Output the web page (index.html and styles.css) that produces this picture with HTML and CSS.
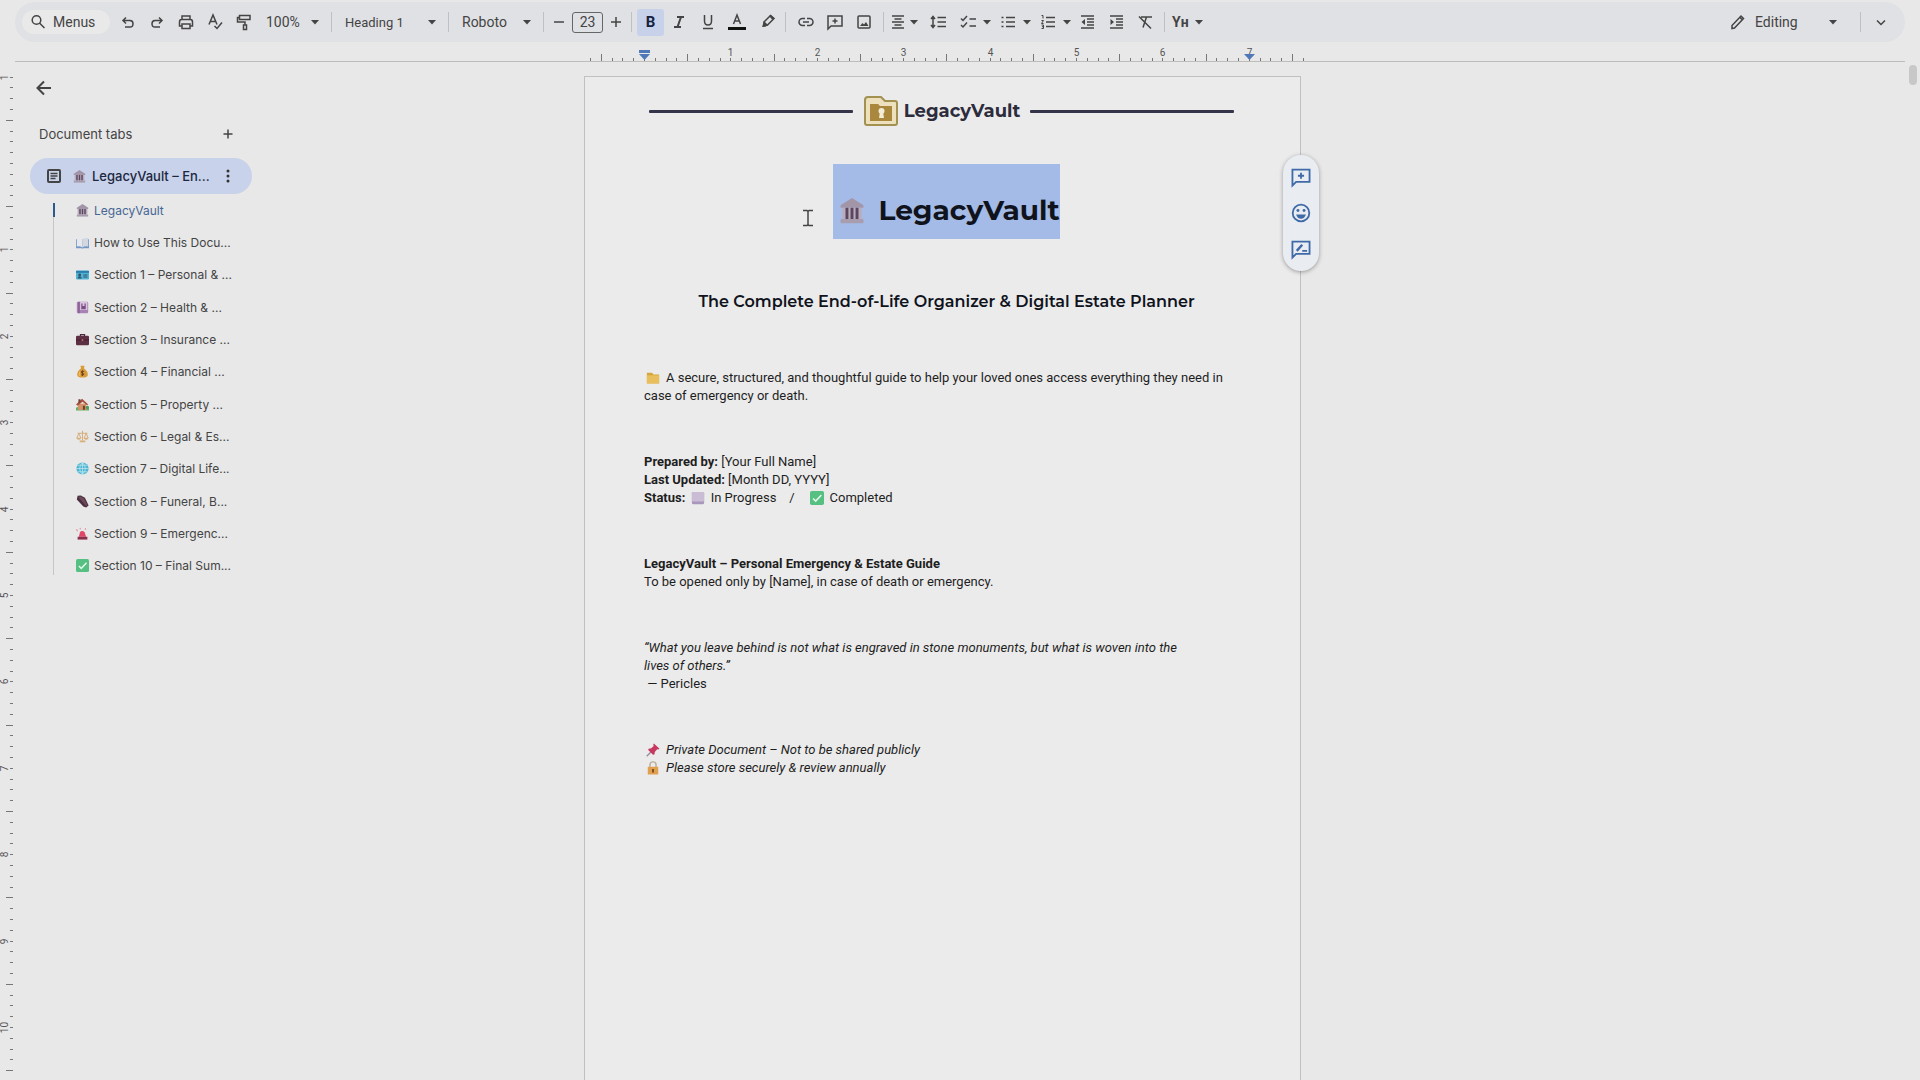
FILE: index.html
```html
<!DOCTYPE html>
<html lang="en">
<head>
    <meta charset="UTF-8">
    <meta name="viewport" content="width=device-width, initial-scale=1.0">
    <title>LegacyVault – End-of-Life Organizer</title>
    <link rel="stylesheet" href="styles.css">
</head>
<body>
    <!-- shared pictograms -->
    <svg class="sprite" aria-hidden="true">
        <symbol id="e-bank" viewBox="0 0 16 16">
            <path fill="#a295a8" d="M8 0 15 4.500V6H1V4.500z"/>
            <path fill="#b9adbd" d="M2 6h12v7H2z"/>
            <path fill="#5b4660" d="M4 6h1.800v7H4zM7.100 6h1.800v7H7.100zM10.200 6H12v7h-1.800z"/>
            <path fill="#a99cad" d="M1 13h14v2.500H1z"/>
        </symbol>
        <symbol id="e-book" viewBox="0 0 16 16">
            <path fill="#7397c4" d="M0 4h16v11H9l-1 .8L7 15H0z"/>
            <path fill="#e6e8ee" d="M1 2.500q4-.5 7 1.500v10q-3-1.800-7-1z"/>
            <path fill="#d3d7e0" d="M15 2.500q-4-.5-7 1.500v10q3-1.800 7-1z"/>
        </symbol>
        <symbol id="e-id" viewBox="0 0 16 16">
            <rect y="3" width="16" height="11" rx="1.500" fill="#4fb3d3"/>
            <path fill="#2b7fae" d="M0 3.500h16V6H0z"/>
            <circle cx="4.500" cy="8.500" r="1.800" fill="#34536d"/>
            <path fill="#34536d" d="M2 13q0-3 2.500-3T7 13zM9 8h5v1.200H9zM9 10.500h5v1.200H9z"/>
        </symbol>
        <symbol id="e-notes" viewBox="0 0 16 16">
            <rect x="1" y="1" width="14" height="14" rx="1.500" fill="#a982b5"/>
            <path fill="#d9c6de" d="M5 1h9v10H5z"/>
            <path fill="#7c4f84" d="M6.500 3H8v3h2.500V3H12v7H6.500zM3 1h1.300v14H3z"/>
        </symbol>
        <symbol id="e-case" viewBox="0 0 16 16">
            <path fill="none" stroke="#4b2738" stroke-width="1.500" d="M5.500 4V2h5v2"/>
            <rect y="3.500" width="16" height="11.500" rx="1.500" fill="#5c2f42"/>
            <path fill="#43202f" d="M0 8h16v1.200H0z"/>
            <path fill="#b8616f" d="M7 7.500h2v2.500H7z"/>
        </symbol>
        <symbol id="e-money" viewBox="0 0 16 16">
            <path fill="#d99a3a" d="M5.500 1h5L9.800 4Q15 8 14.500 12.500 14 15.500 8 15.500T1.500 12.500Q1 8 6.200 4z"/>
            <path fill="#f0bd5d" d="M5 7q-2.500 3-1.500 6 .5 1 2 1z"/>
            <path fill="none" stroke="#70451f" stroke-width="1.200" d="M10 8q-3.500-1.500-3.700.500T9.800 11Q9.800 13.300 6 12M8 6.500v7"/>
        </symbol>
        <symbol id="e-house" viewBox="0 0 16 16">
            <path fill="#69ad63" d="M0 12q8-5 16 0v3.500H0z"/>
            <path fill="#d39268" d="M2.500 7h10v7.500h-10z"/>
            <path fill="#a94f3d" d="M7.500 1 15 8l-1.500 1L8 4.500 2 9.500 0 8z"/>
            <path fill="#6e3f35" d="M8.500 9.500h2.500v5H8.500zM3 1.500h2.500V5L3 6.500z"/>
            <circle cx="14" cy="11.500" r="2" fill="#4f9a54"/>
        </symbol>
        <symbol id="e-scales" viewBox="0 0 16 16">
            <path fill="none" stroke="#d5ad7c" stroke-width="1.200" d="M8 1v12M2 4h12M3.500 4 1 10M3.500 4 6 10M12.500 4 10 10M12.500 4 15 10"/>
            <path fill="#d8ae78" d="M.5 9.500h6q-.5 2.500-3 2.500t-3-2.500zM9.500 9.500h6q-.5 2.500-3 2.500t-3-2.500zM4.500 13h7v2h-7z"/>
        </symbol>
        <symbol id="e-globe" viewBox="0 0 16 16">
            <circle cx="8" cy="8" r="7.500" fill="#4eb6d4"/>
            <path fill="none" stroke="#c2e6ef" stroke-width=".9" d="M8 .5v15M.5 8h15M2 4h12M2 12h12M8 .5q-7 7.500 0 15M8 .5q7 7.500 0 15"/>
        </symbol>
        <symbol id="e-coffin" viewBox="0 0 16 16">
            <path fill="#4a2f3d" d="m2 1 4-.5 5 3L15.500 13l-3 2.500L9 14 1 5.500z"/>
            <path fill="#6d4a5a" d="m3 2 3-.3 4 2.500 4 8.300-1.500 1L4 4z"/>
        </symbol>
        <symbol id="e-siren" viewBox="0 0 16 16">
            <path fill="#e0456a" d="M3.500 12 5 6.500Q5.500 5 7.500 5t3 1.500L12.500 12z"/>
            <path fill="#8c2f4c" d="M2 12h12v3.500H2z"/>
            <path stroke="#e58a9c" stroke-width="1.300" d="M2 5 .5 3M5.500 3 5 1M11 3.500 12 1.500"/>
        </symbol>
        <symbol id="e-check" viewBox="0 0 16 16">
            <rect width="16" height="16" rx="2" fill="#55c081"/>
            <path fill="none" stroke="#e6f6ea" stroke-width="1.800" d="m3.500 8.500 3 3L13 4.500"/>
        </symbol>
        <symbol id="e-folder" viewBox="0 0 16 16">
            <path fill="#d6a63c" d="M1 2h6l1.500 2H15v10H1z"/>
            <path fill="#e8bf5c" d="M1 5h14v9.500H1z"/>
        </symbol>
        <symbol id="e-square" viewBox="0 0 16 16">
            <rect x="1" y="1" width="14" height="14" rx="1.500" fill="#a996bb"/>
            <rect x="1" y="1" width="14" height="11" rx="1.500" fill="#c9bcd4"/>
        </symbol>
        <symbol id="e-pin" viewBox="0 0 16 16">
            <path stroke="#8e8e98" stroke-width="1.400" d="m.8 15.200 6-6"/>
            <path fill="#c8375f" d="m9 .5 6.500 6-1.500 1-1.200-.3-2.800 3-.3 2.800-1.700.5-5.500-5.500.5-1.500 3-.5 2.800-2.500-.5-2z"/>
        </symbol>
        <symbol id="e-lock" viewBox="0 0 16 16">
            <path fill="none" stroke="#b7ab9b" stroke-width="1.600" d="M4.500 8V4.500Q4.500 1 8 1t3.500 3.500V8"/>
            <rect x="2" y="6.500" width="12" height="9" rx="1" fill="#e0a050"/>
            <path fill="#74451f" d="M7 9h2v4H7z"/>
        </symbol>
        <symbol id="i-caret" viewBox="0 0 10 10"><path fill="#444" d="M1 3h8L5 7.500z"/></symbol>
        <symbol id="i-comment" viewBox="0 0 18 18">
            <path class="line" d="M2 16V3h14v10H5zM9 5.500v5M6.500 8h5"/>
        </symbol>
    </svg>

    <header class="toolbar">
        <button class="menus" type="button">
            <svg class="icon" viewBox="0 0 18 18"><circle class="line" cx="7.500" cy="7" r="4.300"/><path class="line" d="m10.500 10 5 5"/></svg>
            Menus
        </button>
        <button class="tool" type="button" aria-label="Undo"><svg class="icon" viewBox="0 0 18 18"><path class="line" d="M7 4.500 4 7.500l3 3M4 7.500h7q3 0 3 3.300T11 14H6"/></svg></button>
        <button class="tool" type="button" aria-label="Redo"><svg class="icon" viewBox="0 0 18 18"><path class="line" d="m11 4.500 3 3-3 3M14 7.500H7q-3 0-3 3.300T7 14h5"/></svg></button>
        <button class="tool" type="button" aria-label="Print"><svg class="icon" viewBox="0 0 18 18"><path class="line" d="M5 6.500V3h8v3.500M5 13H2.500V9q0-2.500 2-2.500h9q2 0 2 2.500v4H13M5 11h8v4.500H5z"/></svg></button>
        <button class="tool" type="button" aria-label="Spelling check"><svg class="icon" viewBox="0 0 18 18"><path class="line" d="M3 11.500 7 2l4 9.500M4.500 8.500h5M8.500 13l2.500 2.500 5-6"/></svg></button>
        <button class="tool" type="button" aria-label="Paint format"><svg class="icon" viewBox="0 0 18 18"><path class="line" d="M4.500 2.500H15v4H4.500zM4.500 4.500H2.500V9H10v3M8.500 12h3v4.500h-3z"/></svg></button>
        <button class="select zoom" type="button">100% <svg class="caret"><use href="#i-caret"/></svg></button>
        <span class="divider"></span>
        <button class="select style" type="button">Heading 1 <svg class="caret"><use href="#i-caret"/></svg></button>
        <span class="divider"></span>
        <button class="select font" type="button">Roboto <svg class="caret"><use href="#i-caret"/></svg></button>
        <span class="divider"></span>
        <button class="step" type="button" aria-label="Decrease font size"><svg class="icon" viewBox="0 0 18 18"><path class="line" d="M4 9h10"/></svg></button>
        <input class="size" type="text" value="23" aria-label="Font size">
        <button class="step" type="button" aria-label="Increase font size"><svg class="icon" viewBox="0 0 18 18"><path class="line" d="M4 9h10M9 4v10"/></svg></button>
        <span class="divider"></span>
        <button class="tool active" type="button" aria-label="Bold">B</button>
        <button class="tool" type="button" aria-label="Italic"><svg class="icon" viewBox="0 0 18 18"><path class="line thick" d="M7 4h7M4 14h7M11 4 7.500 14"/></svg></button>
        <button class="tool" type="button" aria-label="Underline"><svg class="icon" viewBox="0 0 18 18"><path class="line" d="M5.500 2v6q0 4 3.500 4t3.500-4V2M4 15.500h10"/></svg></button>
        <button class="tool" type="button" aria-label="Text color"><svg class="icon" viewBox="0 0 18 18"><path class="line" d="M5.500 11 9 2l3.500 9M6.500 8h5"/><path fill="#111" d="M0 14h18v3H0z"/></svg></button>
        <button class="tool" type="button" aria-label="Highlight color"><svg class="icon" viewBox="0 0 18 18"><path class="line" d="m7 9 6.500-6.500L17 5.500 10.500 12 7 13z"/><path fill="#444" d="m7 8 4 4-2.500 1.500L5 14zM12 3l2-1 3 3-1.500 2z"/></svg></button>
        <span class="divider"></span>
        <button class="tool" type="button" aria-label="Insert link"><svg class="icon" viewBox="0 0 18 18"><path class="line" d="M8 5.500H5.500a3.500 3.500 0 0 0 0 7H8M10 5.500h2.500a3.500 3.500 0 0 1 0 7H10M6 9h6"/></svg></button>
        <button class="tool" type="button" aria-label="Add comment"><svg class="icon"><use href="#i-comment"/></svg></button>
        <button class="tool" type="button" aria-label="Insert image"><svg class="icon" viewBox="0 0 18 18"><rect class="line" x="3" y="3" width="12" height="12" rx="1"/><path fill="#444" d="m5 13 2.500-3 1.500 1.500 2-2.500 2.500 4z"/></svg></button>
        <span class="divider"></span>
        <button class="split tight" type="button" aria-label="Align"><svg class="icon" viewBox="0 0 18 18"><path class="line" d="M3 3h12M5.500 6h7M3 9h12M5.500 12h7M3 15h12"/></svg><svg class="caret"><use href="#i-caret"/></svg></button>
        <button class="tool" type="button" aria-label="Line spacing"><svg class="icon" viewBox="0 0 18 18"><path class="line" d="M4 4v10M2 6l2-2.500L6 6M2 12l2 2.500L6 12M8.500 4.500H17M8.500 9H17M8.500 13.500H17"/></svg></button>
        <button class="split" type="button" aria-label="Checklist"><svg class="icon" viewBox="0 0 18 18"><path class="line" d="m2 5.500 2 2L8 3M2 12l2 2 4-4.500M10.500 6H17M10.500 13H17"/></svg><svg class="caret"><use href="#i-caret"/></svg></button>
        <button class="split" type="button" aria-label="Bulleted list"><svg class="icon" viewBox="0 0 18 18"><path class="line" d="M2.500 4.500h2M2.500 9h2M2.500 13.500h2M7 4.500h9M7 9h9M7 13.500h9"/></svg><svg class="caret"><use href="#i-caret"/></svg></button>
        <button class="split" type="button" aria-label="Numbered list"><svg class="icon" viewBox="0 0 18 18"><path class="line" d="M7 4.500h9M7 9h9M7 13.500h9"/><path class="line thin" d="M2.500 2.500H4v3M2.500 7.500h2l-2 3h2M2.500 12h2v3.500h-2M3 13.700h1.500"/></svg><svg class="caret"><use href="#i-caret"/></svg></button>
        <button class="tool" type="button" aria-label="Decrease indent"><svg class="icon" viewBox="0 0 18 18"><path class="line" d="M3 3h13M9 6h7M9 9h7M9 12h7M3 15h13"/><path fill="#444" d="M7 6v6L3.500 9z"/></svg></button>
        <button class="tool" type="button" aria-label="Increase indent"><svg class="icon" viewBox="0 0 18 18"><path class="line" d="M3 3h13M9 6h7M9 9h7M9 12h7M3 15h13"/><path fill="#444" d="M3.500 6v6L7 9z"/></svg></button>
        <button class="tool" type="button" aria-label="Clear formatting"><svg class="icon" viewBox="0 0 18 18"><path class="line" d="M5 4h11M10.500 4 7 14.500M3 3.500l12 12"/></svg></button>
        <span class="divider"></span>
        <button class="split lang" type="button" aria-label="Input tools">Yн <svg class="caret"><use href="#i-caret"/></svg></button>
        <div class="right-tools">
            <button class="select mode" type="button">
                <svg class="icon" viewBox="0 0 18 18"><path class="line" d="M3 15.500v-3l9-9.500 2.500 2.500-9 9.500zM11 4.500l2.500 2.500"/></svg>
                Editing <svg class="caret"><use href="#i-caret"/></svg>
            </button>
            <span class="divider"></span>
            <button class="tool" type="button" aria-label="Hide menus"><svg class="icon" viewBox="0 0 18 18"><path class="line" d="m5 7.500 4 4 4-4"/></svg></button>
        </div>
    </header>

    <div class="ruler">
        <svg class="ruler-x" id="rulerX"></svg>
    </div>

    <main class="workspace">
        <div class="left">
            <svg class="ruler-y" id="rulerY"></svg>
            <nav class="sidebar">
                <button class="plain back" type="button" aria-label="Close tabs"><svg class="icon" viewBox="0 0 18 18"><path class="line thick" d="M16 9H3M9 2.500 2.500 9 9 15.500"/></svg></button>
                <div class="tabs-head">
                    <h2>Document tabs</h2>
                    <button class="plain" type="button" aria-label="Add tab"><svg class="icon" viewBox="0 0 18 18"><path class="line" d="M4.500 9h9M9 4.500v9"/></svg></button>
                </div>
                <div class="tab">
                    <svg class="icon" viewBox="0 0 18 18"><rect class="line thick" x="3" y="3" width="12" height="12" rx="1"/><path class="line" d="M5.500 6.500h7M5.500 9h7M5.500 11.500h5"/></svg>
                    <svg class="emoji"><use href="#e-bank"/></svg>
                    <a href="#top">LegacyVault – En...</a>
                    <button class="plain" type="button" aria-label="Tab options"><svg class="icon" viewBox="0 0 18 18"><g fill="#333"><circle cx="9" cy="4" r="1.500"/><circle cx="9" cy="9" r="1.500"/><circle cx="9" cy="14" r="1.500"/></g></svg></button>
                </div>
                <ul class="outline">
                    <li class="current"><svg class="emoji"><use href="#e-bank"/></svg><a href="#top">LegacyVault</a></li>
                    <li><svg class="emoji"><use href="#e-book"/></svg><a href="#how">How to Use This Docu...</a></li>
                    <li><svg class="emoji"><use href="#e-id"/></svg><a href="#s1">Section 1 – Personal &amp; ...</a></li>
                    <li><svg class="emoji"><use href="#e-notes"/></svg><a href="#s2">Section 2 – Health &amp; ...</a></li>
                    <li><svg class="emoji"><use href="#e-case"/></svg><a href="#s3">Section 3 – Insurance ...</a></li>
                    <li><svg class="emoji"><use href="#e-money"/></svg><a href="#s4">Section 4 – Financial ...</a></li>
                    <li><svg class="emoji"><use href="#e-house"/></svg><a href="#s5">Section 5 – Property ...</a></li>
                    <li><svg class="emoji"><use href="#e-scales"/></svg><a href="#s6">Section 6 – Legal &amp; Es...</a></li>
                    <li><svg class="emoji"><use href="#e-globe"/></svg><a href="#s7">Section 7 – Digital Life...</a></li>
                    <li><svg class="emoji"><use href="#e-coffin"/></svg><a href="#s8">Section 8 – Funeral, B...</a></li>
                    <li><svg class="emoji"><use href="#e-siren"/></svg><a href="#s9">Section 9 – Emergenc...</a></li>
                    <li><svg class="emoji"><use href="#e-check"/></svg><a href="#s10">Section 10 – Final Sum...</a></li>
                </ul>
            </nav>
        </div>

        <article class="page" id="top">
            <div class="letterhead">
                <svg class="logo" viewBox="0 0 36 32">
                    <path fill="#ece0bd" stroke="#a39152" stroke-width="2" stroke-linejoin="round" d="M5 2h13l4 4h10q2 0 2 2v20q0 2-2 2H4q-2 0-2-2V5q0-3 3-3z"/>
                    <path fill="#a9873c" d="M7 9h8l2 2h12v15H7z"/>
                    <circle cx="18.500" cy="16" r="3" fill="#f3ecd6"/>
                    <path fill="#f3ecd6" d="M17 17h3l1 6h-5z"/>
                </svg>
                <span>LegacyVault</span>
            </div>

            <h1><span class="selected"><svg class="emoji"><use href="#e-bank"/></svg>LegacyVault</span></h1>
            <h3>The Complete End-of-Life Organizer &amp; Digital Estate Planner</h3>

            <p><svg class="emoji"><use href="#e-folder"/></svg>A secure, structured, and thoughtful guide to help your loved ones access everything they need in<br>case of emergency or death.</p>
            <p>
                <b>Prepared by:</b> [Your Full Name]<br>
                <b>Last Updated:</b> [Month DD, YYYY]<br>
                <b>Status:</b> <svg class="emoji"><use href="#e-square"/></svg>In Progress &nbsp; &nbsp;/ &nbsp; &nbsp;<svg class="emoji"><use href="#e-check"/></svg>Completed
            </p>
            <p><b>LegacyVault – Personal Emergency &amp; Estate Guide</b><br>To be opened only by [Name], in case of death or emergency.</p>
            <p><i>“What you leave behind is not what is engraved in stone monuments, but what is woven into the<br>lives of others.”</i><br>&nbsp;— Pericles</p>
            <p><i><svg class="emoji"><use href="#e-pin"/></svg>Private Document – Not to be shared publicly<br><svg class="emoji"><use href="#e-lock"/></svg>Please store securely &amp; review annually</i></p>

            <svg class="cursor" viewBox="0 0 12 18"><path class="line" d="M1 1.500h4l1 1 1-1h4M1 16.500h4l1-1 1 1h4M6 2.500v13"/></svg>

            <div class="actions">
                <button class="plain" type="button" aria-label="Add comment"><svg class="icon"><use href="#i-comment"/></svg></button>
                <button class="plain" type="button" aria-label="Add emoji reaction"><svg class="icon" viewBox="0 0 18 18"><circle class="line" cx="9" cy="9" r="6.800"/><path fill="#3f6aa8" d="M5 10.200h8q-1 3.500-4 3.500t-4-3.500z"/><circle cx="6.500" cy="7" r="1.200" fill="#3f6aa8"/><circle cx="11.500" cy="7" r="1.200" fill="#3f6aa8"/></svg></button>
                <button class="plain" type="button" aria-label="Suggest edits"><svg class="icon" viewBox="0 0 18 18"><path class="line" d="M2 16V3h14v10H5zM10 10.500h4"/><path class="line thick" d="m5.500 10.500 4.500-5"/></svg></button>
            </div>
        </article>

        <div class="scrollbar"><div class="thumb"></div></div>
    </main>

    <script src="ruler.js"></script>
</body>
</html>
```
FILE: styles.css
```css
* {
    box-sizing: border-box;
}
body {
    --ink: #444;
    margin: 0;
    height: 100vh;
    display: flex;
    flex-direction: column;
    overflow: hidden;
    background: #e8e8e8;
    color: #444;
    font-family: Inter, "Open Sans", sans-serif;
    font-size: 13px;
}
.sprite {
    display: none;
}
button {
    display: flex;
    align-items: center;
    padding: 0;
    border: none;
    background: none;
    color: inherit;
    font: inherit;
    cursor: pointer;
}
a {
    color: inherit;
    text-decoration: none;
}
.icon {
    width: 18px;
    height: 18px;
    flex: none;
}
.caret {
    width: 10px;
    height: 10px;
    flex: none;
}
.line {
    fill: none;
    stroke: var(--ink);
    stroke-width: 1.5;
}
.thick {
    stroke-width: 2;
}
.thin {
    stroke-width: 1;
}

/* toolbar */
.toolbar {
    display: flex;
    align-items: center;
    height: 40px;
    margin: 2px 15px 0;
    padding: 0 10px 0 7px;
    border-radius: 20px;
    background: #e0e1e4;
    font-family: Roboto, sans-serif;
    font-size: 14px;
    flex: none;
}
.menus {
    width: 88px;
    height: 24px;
    margin-right: 3px;
    padding-left: 7px;
    gap: 6px;
    border-radius: 12px;
    background: #e9e9ea;
}
.tool {
    width: 29px;
    height: 27px;
    justify-content: center;
}
.tool.active {
    width: 27px;
    border-radius: 3px;
    background: #c8d1ea;
    color: #14213d;
    font-size: 15px;
    font-weight: bold;
}
.select {
    height: 27px;
    padding: 0 6px 0 8px;
    justify-content: space-between;
}
.zoom {
    width: 68px;
}
.style {
    width: 106px;
    font-size: 13px;
}
.font {
    width: 84px;
}
.divider {
    width: 1px;
    height: 20px;
    margin: 0 5px;
    background: #bfc0c4;
}
.step {
    width: 20px;
    height: 27px;
    justify-content: center;
}
.size {
    width: 31px;
    height: 21px;
    margin: 0 3px;
    padding: 0;
    border: 1px solid #666;
    border-radius: 3px;
    background: none;
    color: inherit;
    font: inherit;
    text-align: center;
}
.split {
    width: 40px;
    height: 27px;
    padding-left: 7px;
    gap: 5px;
}
.split.tight {
    width: 34px;
    padding-left: 0;
    gap: 2px;
}
.split.lang {
    padding-left: 2px;
    font-weight: bold;
}
.right-tools {
    display: flex;
    align-items: center;
    margin-left: auto;
}
.mode {
    width: 126px;
    padding: 0 17px 0 0;
    gap: 8px;
}
.mode .caret {
    margin-left: auto;
}

/* rulers */
.ruler {
    height: 20px;
    margin: 0 15px;
    padding-right: 35px;
    border-bottom: 1px solid #bdbdb9;
    display: flex;
    justify-content: center;
    flex: none;
}
.ruler-x {
    width: 717px;
    height: 19px;
    overflow: visible;
}
.ruler-y {
    width: 15px;
    height: 100%;
    flex: none;
}
.ruler-x text,
.ruler-y text {
    fill: #555;
    font-family: Roboto, sans-serif;
    font-size: 10px;
    text-anchor: middle;
}
.tick {
    stroke: #777;
}
.marker {
    fill: #5078b8;
}

/* workspace */
.workspace {
    flex: 1;
    min-height: 0;
    display: grid;
    grid-template-columns: 1fr 717px 1fr 35px;
}
.left {
    display: flex;
    min-height: 0;
}
.sidebar {
    width: 222px;
    margin-left: 15px;
    padding-top: 14px;
}
.plain {
    width: 24px;
    height: 24px;
    justify-content: center;
}
.back {
    margin-left: 2px;
}
.tabs-head {
    display: flex;
    align-items: center;
    justify-content: space-between;
    height: 36px;
    margin: 16px 0 6px;
    padding: 0 12px 0 9px;
}
.tabs-head h2 {
    margin: 0;
    font-size: 13px;
    font-weight: 400;
}
.tab {
    display: flex;
    align-items: center;
    height: 36px;
    padding: 0 12px 0 15px;
    border-radius: 18px;
    background: #c8d2ea;
    color: #1c2740;
    font-weight: 500;
}
.tab .emoji {
    margin: 0 6px 0 10px;
}
.tab .plain {
    margin-left: auto;
}
.emoji {
    width: 13px;
    height: 13px;
    flex: none;
}
.outline {
    position: relative;
    display: flex;
    flex-direction: column;
    height: 388px;
    margin: 0;
    padding: 0 0 0 46px;
    list-style: none;
    font-size: 12px;
}
.outline::before {
    content: "";
    position: absolute;
    left: 23px;
    top: 9px;
    bottom: 7px;
    width: 1px;
    background: #c6c6c2;
}
.outline li {
    display: flex;
    flex: 1;
    align-items: center;
    gap: 5px;
    white-space: nowrap;
}
.outline .current {
    color: #466694;
}
.current::before {
    content: "";
    position: absolute;
    left: 23px;
    top: 9px;
    width: 2px;
    height: 14px;
    background: #2d5a8c;
}

/* document */
.page {
    position: relative;
    margin-top: 14px;
    padding: 17px 60px 0 59px;
    border: 1px solid #c0c0c0;
    border-bottom: none;
    background: #ebebeb;
    color: #1e1e1e;
    font-family: Roboto, sans-serif;
    font-size: 13px;
    line-height: 18px;
}
.letterhead {
    display: flex;
    align-items: center;
    height: 34px;
    margin: 0 6px 0 5px;
    color: #2c2c3c;
    font-family: Montserrat, Inter, sans-serif;
    font-size: 18px;
    font-weight: bold;
}
.letterhead::before,
.letterhead::after {
    content: "";
    flex: 1;
    height: 3px;
    border-radius: 1px;
    background: #34344a;
}
.logo {
    width: 36px;
    height: 32px;
    margin: 0 5px 0 10px;
}
.letterhead::after {
    margin-left: 10px;
}
.page h1,
.page h3 {
    margin: 0;
    padding-left: 9px;
    text-align: center;
    color: #10131c;
    font-family: Montserrat, Inter, sans-serif;
}
.page h1 {
    display: flex;
    justify-content: center;
    margin-top: 36px;
    font-size: 28px;
    line-height: 34px;
}
.selected {
    padding: 29px 0 12px 6px;
    background: #a3bbe6;
}
.selected .emoji {
    width: 26px;
    height: 26px;
    margin-right: 13px;
    vertical-align: -4px;
}
.page h3 {
    margin: 51px 0 55px;
    font-size: 16px;
    font-weight: 600;
    line-height: 24px;
}
.page p {
    margin: 0 0 48px;
    white-space: nowrap;
}
.page p .emoji {
    width: 14px;
    height: 14px;
    margin: 0 6px 0 2px;
    vertical-align: -3px;
}
.cursor {
    position: absolute;
    left: 217px;
    top: 132px;
    width: 12px;
    height: 18px;
}

/* floating buttons over the page edge */
.actions {
    --ink: #3f6aa8;
    position: absolute;
    top: 78px;
    right: -19px;
    display: flex;
    flex-direction: column;
    align-items: center;
    gap: 12px;
    width: 36px;
    padding: 10px 0;
    border-radius: 18px;
    background: #e9ecf1;
    box-shadow: 0 1px 4px rgba(0, 0, 0, 0.35);
}
.actions .icon {
    width: 22px;
    height: 22px;
}
.scrollbar {
    grid-column: 4;
    display: flex;
    justify-content: flex-end;
    padding: 3px 3px 0 0;
}
.thumb {
    width: 8px;
    height: 20px;
    border-radius: 4px;
    background: #c8c8c9;
}
```
FILE: ruler.js
```js
const INCH = 86.4;
const rulerX = document.getElementById('rulerX');
const rulerY = document.getElementById('rulerY');

function add(svg, tag, attrs, text) {
    const el = document.createElementNS('http://www.w3.org/2000/svg', tag);
    for (const key in attrs) el.setAttribute(key, attrs[key]);
    if (text) el.textContent = text;
    svg.appendChild(el);
}

// horizontal: zero sits on the left page margin
for (let i = -5; i <= 61; i++) {
    const x = Math.round(60 + i * INCH / 8) + 0.5;
    const half = Math.abs(i) % 8 === 4;
    add(rulerX, 'line', { class: 'tick', x1: x, x2: x, y1: half ? 12 : 16, y2: 19 });
    if (i > 0 && i % 8 === 0) add(rulerX, 'text', { x: x, y: 14 }, i / 8);
}
add(rulerX, 'path', { class: 'marker', d: 'M55 8h11v3H55zM55 12h11l-5.500 6z' });
add(rulerX, 'path', { class: 'marker', d: 'M660 12h11l-5.500 6z' });

// vertical: starts at the page top, zero at the top margin
for (let i = -8; i <= 84; i++) {
    const y = Math.round(101 + i * INCH / 8) + 0.5;
    const half = Math.abs(i) % 8 === 4;
    add(rulerY, 'line', { class: 'tick', x1: half ? 6 : 10, x2: 13, y1: y, y2: y });
    if (i !== 0 && i % 8 === 0) {
        add(rulerY, 'text', { transform: `translate(8 ${y}) rotate(-90)` }, Math.abs(i / 8));
    }
}
```
